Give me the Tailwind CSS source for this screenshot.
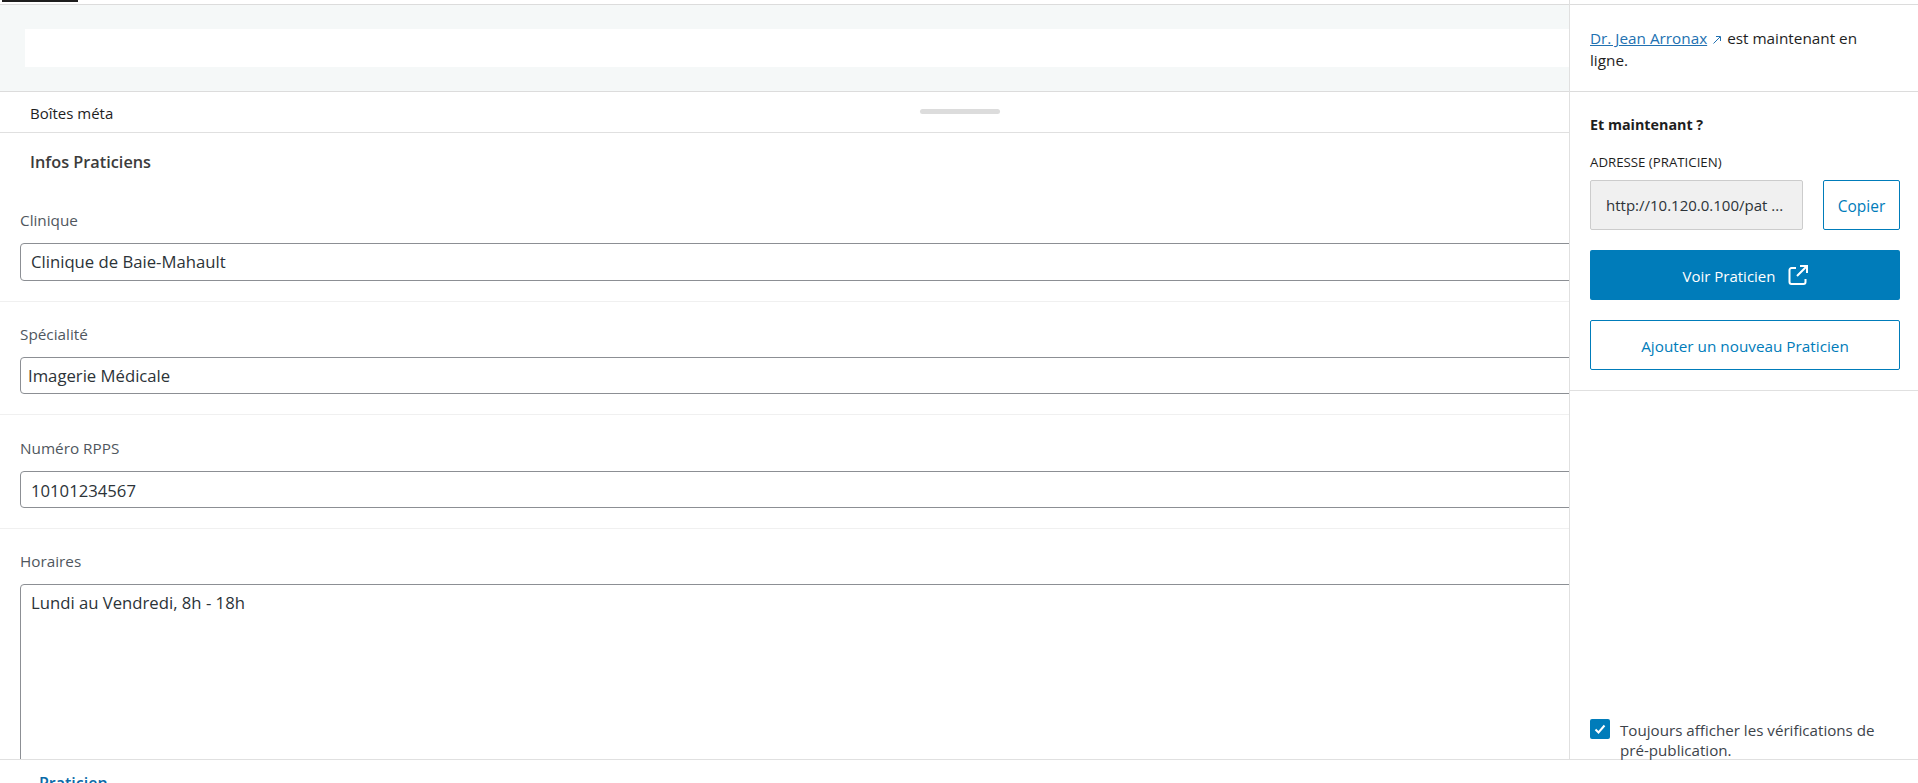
<!DOCTYPE html>
<html lang="fr">
<head>
<meta charset="utf-8">
<script src="https://cdn.jsdelivr.net/npm/@tailwindcss/browser@4"></script>
<title>Praticien</title>
</head>
<body class="bg-white">
<div class="w-[1918px] h-[783px] overflow-hidden flex flex-col font-['Open_Sans',sans-serif] text-[#1e1e1e] bg-white">
  <div class="flex h-[760px] border-b border-[#e0e0e0] shrink-0">
    <main class="w-[1569px] shrink-0 overflow-hidden flex flex-col">
      <div class="h-[5px] shrink-0 border-b border-[#dcdcdc]"><div class="ml-[2px] w-[76px] h-[2px] bg-[#1e1e1e]"></div></div>
      <div class="h-[87px] shrink-0 bg-[#f5f8f8] border-b border-[#dcdcdc] pl-[25px] pt-[24px]"><div class="h-[38px] bg-white"></div></div>
      <div class="relative h-[41px] shrink-0 border-b border-[#e0e0e0] pl-[30px] pt-[2px] flex items-center text-[15px] text-[#1e1e1e]">Boîtes méta
        <div class="absolute left-[920px] top-[17px] w-[80px] h-[5px] rounded-[3px] bg-[#dcdcdc]"></div>
      </div>
      <div class="pl-[20px] w-[1600px]">
        <h2 class="pl-[10px] pt-[18px] h-[77px] text-[16.3px] leading-[22px] font-semibold text-[#3c3c3c]">Infos Praticiens</h2>
        <div class="-ml-[20px] pl-[20px] h-[92px] border-b border-[#f0f0f0]">
          <label class="block text-[15.3px] leading-[20px] text-[#50575e] mb-[13px]">Clinique</label>
          <div class="h-[38px] border border-[#8c8f94] rounded-[4px] pl-[10px] flex items-center text-[16.7px] text-[#2c3338]">Clinique de Baie-Mahault</div>
        </div>
        <div class="-ml-[20px] pl-[20px] pt-[22px] h-[113px] border-b border-[#f0f0f0]">
          <label class="block text-[15.3px] leading-[20px] text-[#50575e] mb-[13px]">Spécialité</label>
          <div class="h-[37px] border border-[#8c8f94] rounded-[4px] pl-[7px] pt-[1px] flex items-center text-[16.7px] text-[#2c3338]">Imagerie Médicale</div>
        </div>
        <div class="-ml-[20px] pl-[20px] pt-[23px] h-[114px] border-b border-[#f0f0f0]">
          <label class="block text-[15.3px] leading-[20px] text-[#50575e] mb-[13px]">Numéro RPPS</label>
          <div class="h-[37px] border border-[#8c8f94] rounded-[4px] pl-[10px] pt-[2px] flex items-center text-[16.7px] text-[#2c3338]">10101234567</div>
        </div>
        <div class="-ml-[20px] pl-[20px] pt-[22px]">
          <label class="block text-[15.3px] leading-[20px] text-[#50575e] mb-[13px]">Horaires</label>
          <div class="h-[200px] border border-[#8c8f94] rounded-[4px] pl-[10px] pt-[6px] text-[16.7px] leading-[24px] text-[#2c3338]">Lundi au Vendredi, 8h - 18h</div>
        </div>
      </div>
    </main>
    <aside class="relative w-[349px] shrink-0 border-l border-[#e0e0e0] bg-white text-[15.3px] flex flex-col">
      <div class="h-[5px] shrink-0 border-b border-[#dcdcdc]"></div>
      <div class="h-[87px] shrink-0 border-b border-[#dcdcdc] pl-[20px] pr-[30px] pt-[22px] leading-[22px] text-[#1e1e1e]">
        <a class="text-[#2271b1] underline">Dr. Jean Arronax</a>
        <svg class="inline-block w-[10px] h-[10px] mx-[1px] text-[#2271b1]" viewBox="0 0 10 10" fill="none" stroke="currentColor" stroke-width="1"><path d="M1.5 8.5 8 2M4 1.5h4.5V6"/></svg>
        est maintenant en ligne.
      </div>
      <div class="h-[299px] shrink-0 border-b border-[#e0e0e0] pl-[20px] pr-[18px] pt-[23px]">
        <p class="text-[14.3px] leading-[20px] font-bold text-[#1e1e1e]">Et maintenant ?</p>
        <p class="mt-[17px] text-[13.25px] leading-[20px] text-[#1e1e1e]">ADRESSE (PRATICIEN)</p>
        <div class="mt-[8px] flex justify-between h-[50px]">
          <div class="w-[213px] bg-[#f0f0f0] border border-[#ccc] rounded-[2px] pl-[15px] flex items-center text-[#2c3338] text-[15px]">http://10.120.0.100/pat ...</div>
          <button class="w-[77px] border border-[#007cba] rounded-[2px] text-[#007cba] text-[15.5px] pt-[4px]">Copier</button>
        </div>
        <button class="mt-[20px] w-full h-[50px] bg-[#007cba] rounded-[2px] text-white text-[15px] flex items-center justify-center gap-[12px]"><span class="pt-[2px]">Voir Praticien</span>
          <svg class="w-[20px] h-[20px]" viewBox="0 0 20 20" fill="none" stroke="currentColor" stroke-width="2"><path d="M8 3H3.5A2 2 0 0 0 1.5 5v12a2 2 0 0 0 2 2h12a2 2 0 0 0 2-2v-3"/><path d="M9 11 18.5 1.5M12 1h7v7"/></svg>
        </button>
        <button class="mt-[20px] w-full h-[50px] border border-[#007cba] rounded-[2px] text-[#007cba] text-[15.3px] pt-[2px]">Ajouter un nouveau Praticien</button>
      </div>
      <div class="absolute left-[20px] top-[719px] flex gap-[10px] w-[310px]">
        <span class="w-[20px] h-[20px] shrink-0 rounded-[2px] bg-[#007cba] flex items-center justify-center">
          <svg class="w-[14px] h-[14px]" viewBox="0 0 14 14" fill="none" stroke="#fff" stroke-width="2"><path d="M2.5 7.5 5.5 10.5 11.5 3.5"/></svg>
        </span>
        <span class="text-[15.15px] leading-[20px] text-[#3c434a] mt-[1px]">Toujours afficher les vérifications de pré-publication.</span>
      </div>
    </aside>
  </div>
  <div class="pl-[39px] pt-[13px] text-[16px] leading-[20px] font-semibold text-[#0a6aa8]">Praticien</div>
</div>
</body>
</html>
